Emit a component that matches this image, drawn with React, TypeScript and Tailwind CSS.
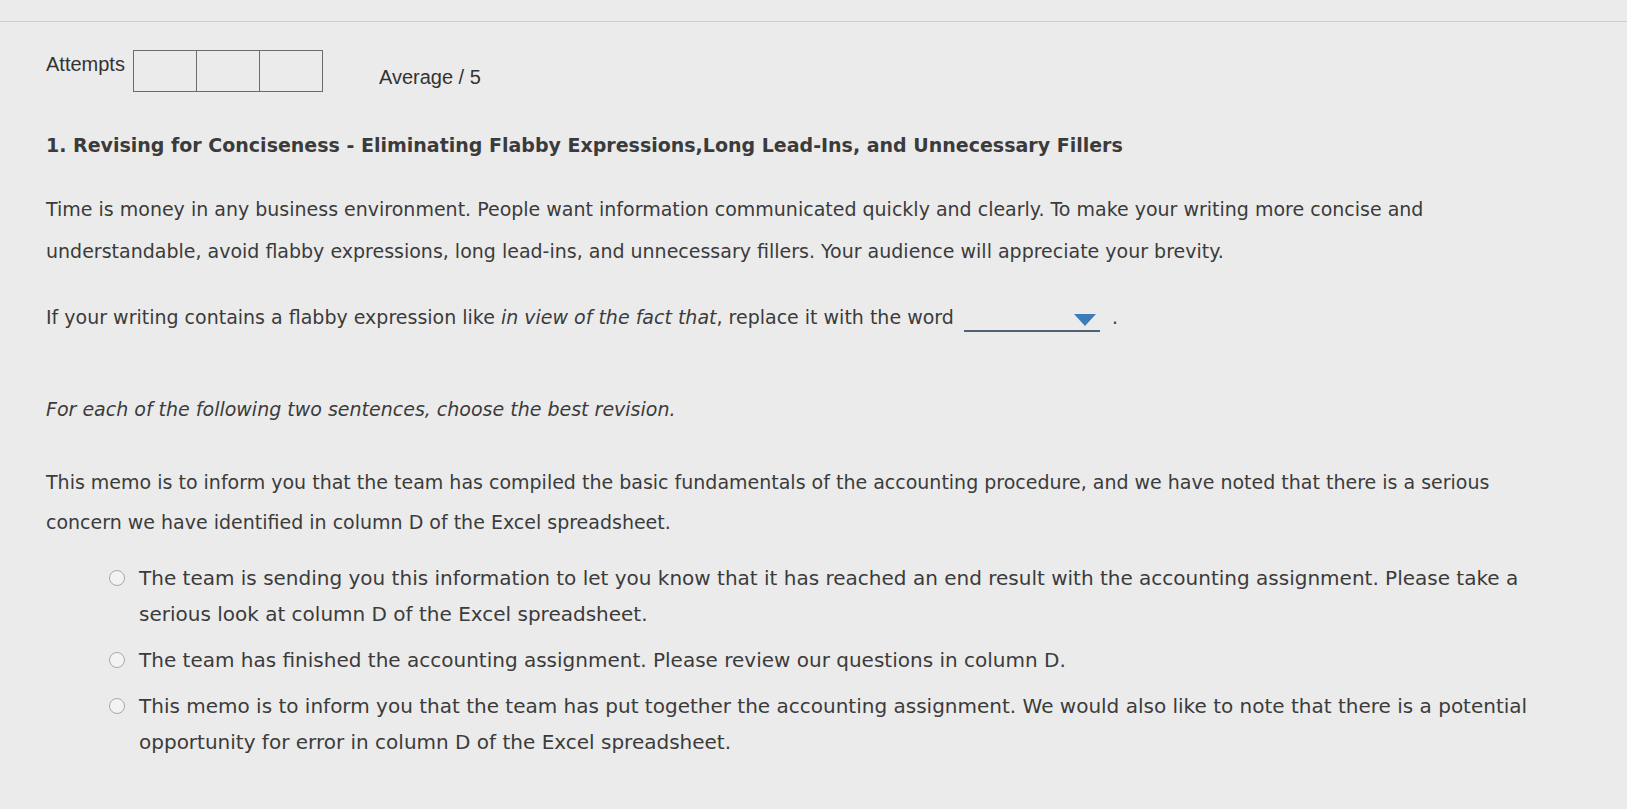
import React from 'react';

const body = "[font-family:'DejaVu_Sans',Verdana,sans-serif] text-[19px] text-[#3b3b3b]";

const options = [
  'The team is sending you this information to let you know that it has reached an end result with the accounting assignment. Please take a serious look at column D of the Excel spreadsheet.',
  'The team has finished the accounting assignment. Please review our questions in column D.',
  'This memo is to inform you that the team has put together the accounting assignment. We would also like to note that there is a potential opportunity for error in column D of the Excel spreadsheet.',
];

function Dropdown() {
  return (
    <span className="relative inline-block w-[136px] h-[22px] align-[-8px] border-b-2 border-[#4f6275] ml-1">
      <svg className="absolute right-[4px] top-[4px]" width="22" height="12" viewBox="0 0 22 12">
        <polygon points="0,0 22,0 11,12" fill="#3c7cb8" />
      </svg>
    </span>
  );
}

export default function App() {
  return (
    <div className="min-h-[809px] w-full bg-[#ebebeb] overflow-hidden">
      <div className="h-[22px] border-b border-[#cdcdcd]" />
      <div className="pl-[46px] pr-[30px]">
        {/* attempts row */}
        <div className="flex items-start mt-[28px] [font-family:'Liberation_Sans',Arial,sans-serif] text-[20px] text-[#333]">
          <span className="mt-[-1px] mr-[8px]">Attempts</span>
          <div className="flex border border-[#6b6b6b]">
            <div className="w-[63px] h-[40px] border-r border-[#6b6b6b]" />
            <div className="w-[63px] h-[40px] border-r border-[#6b6b6b]" />
            <div className="w-[62px] h-[40px]" />
          </div>
          <span className="ml-[56px] mt-[12px]">Average / 5</span>
        </div>

        <h2 className={`${body} font-bold leading-[26px] mt-[40px] text-[#3a3a3a]`}>
          1. Revising for Conciseness - Eliminating Flabby Expressions,Long Lead-Ins, and Unnecessary Fillers
        </h2>

        <p className={`${body} leading-[42px] mt-[30px] max-w-[1410px]`}>
          Time is money in any business environment. People want information communicated quickly and clearly. To make your writing more concise and understandable, avoid flabby expressions, long lead-ins, and unnecessary fillers. Your audience will appreciate your brevity.
        </p>

        <p className={`${body} leading-[30px] mt-[30px]`}>
          If your writing contains a flabby expression like <i>in view of the fact that</i>, replace it with the word{' '}
          <Dropdown />
          <span className="ml-[12px]">.</span>
        </p>

        <p className={`${body} italic leading-[30px] mt-[62px]`}>
          For each of the following two sentences, choose the best revision.
        </p>

        <p className={`${body} leading-[40px] mt-[38px] max-w-[1450px]`}>
          This memo is to inform you that the team has compiled the basic fundamentals of the accounting procedure, and we have noted that there is a serious concern we have identified in column D of the Excel spreadsheet.
        </p>

        <div className="flex flex-col gap-[10px] mt-[18px] pl-[63px]">
          {options.map((opt) => (
            <label key={opt} className="flex items-start gap-[14px] cursor-pointer">
              <span className="mt-[10px] shrink-0 w-[16px] h-[16px] rounded-full border border-[#a8a8a8] bg-[#f3f3f3]" />
              <span className={`${body} text-[20px] leading-[36px] max-w-[1400px]`}>{opt}</span>
            </label>
          ))}
        </div>
      </div>
    </div>
  );
}
